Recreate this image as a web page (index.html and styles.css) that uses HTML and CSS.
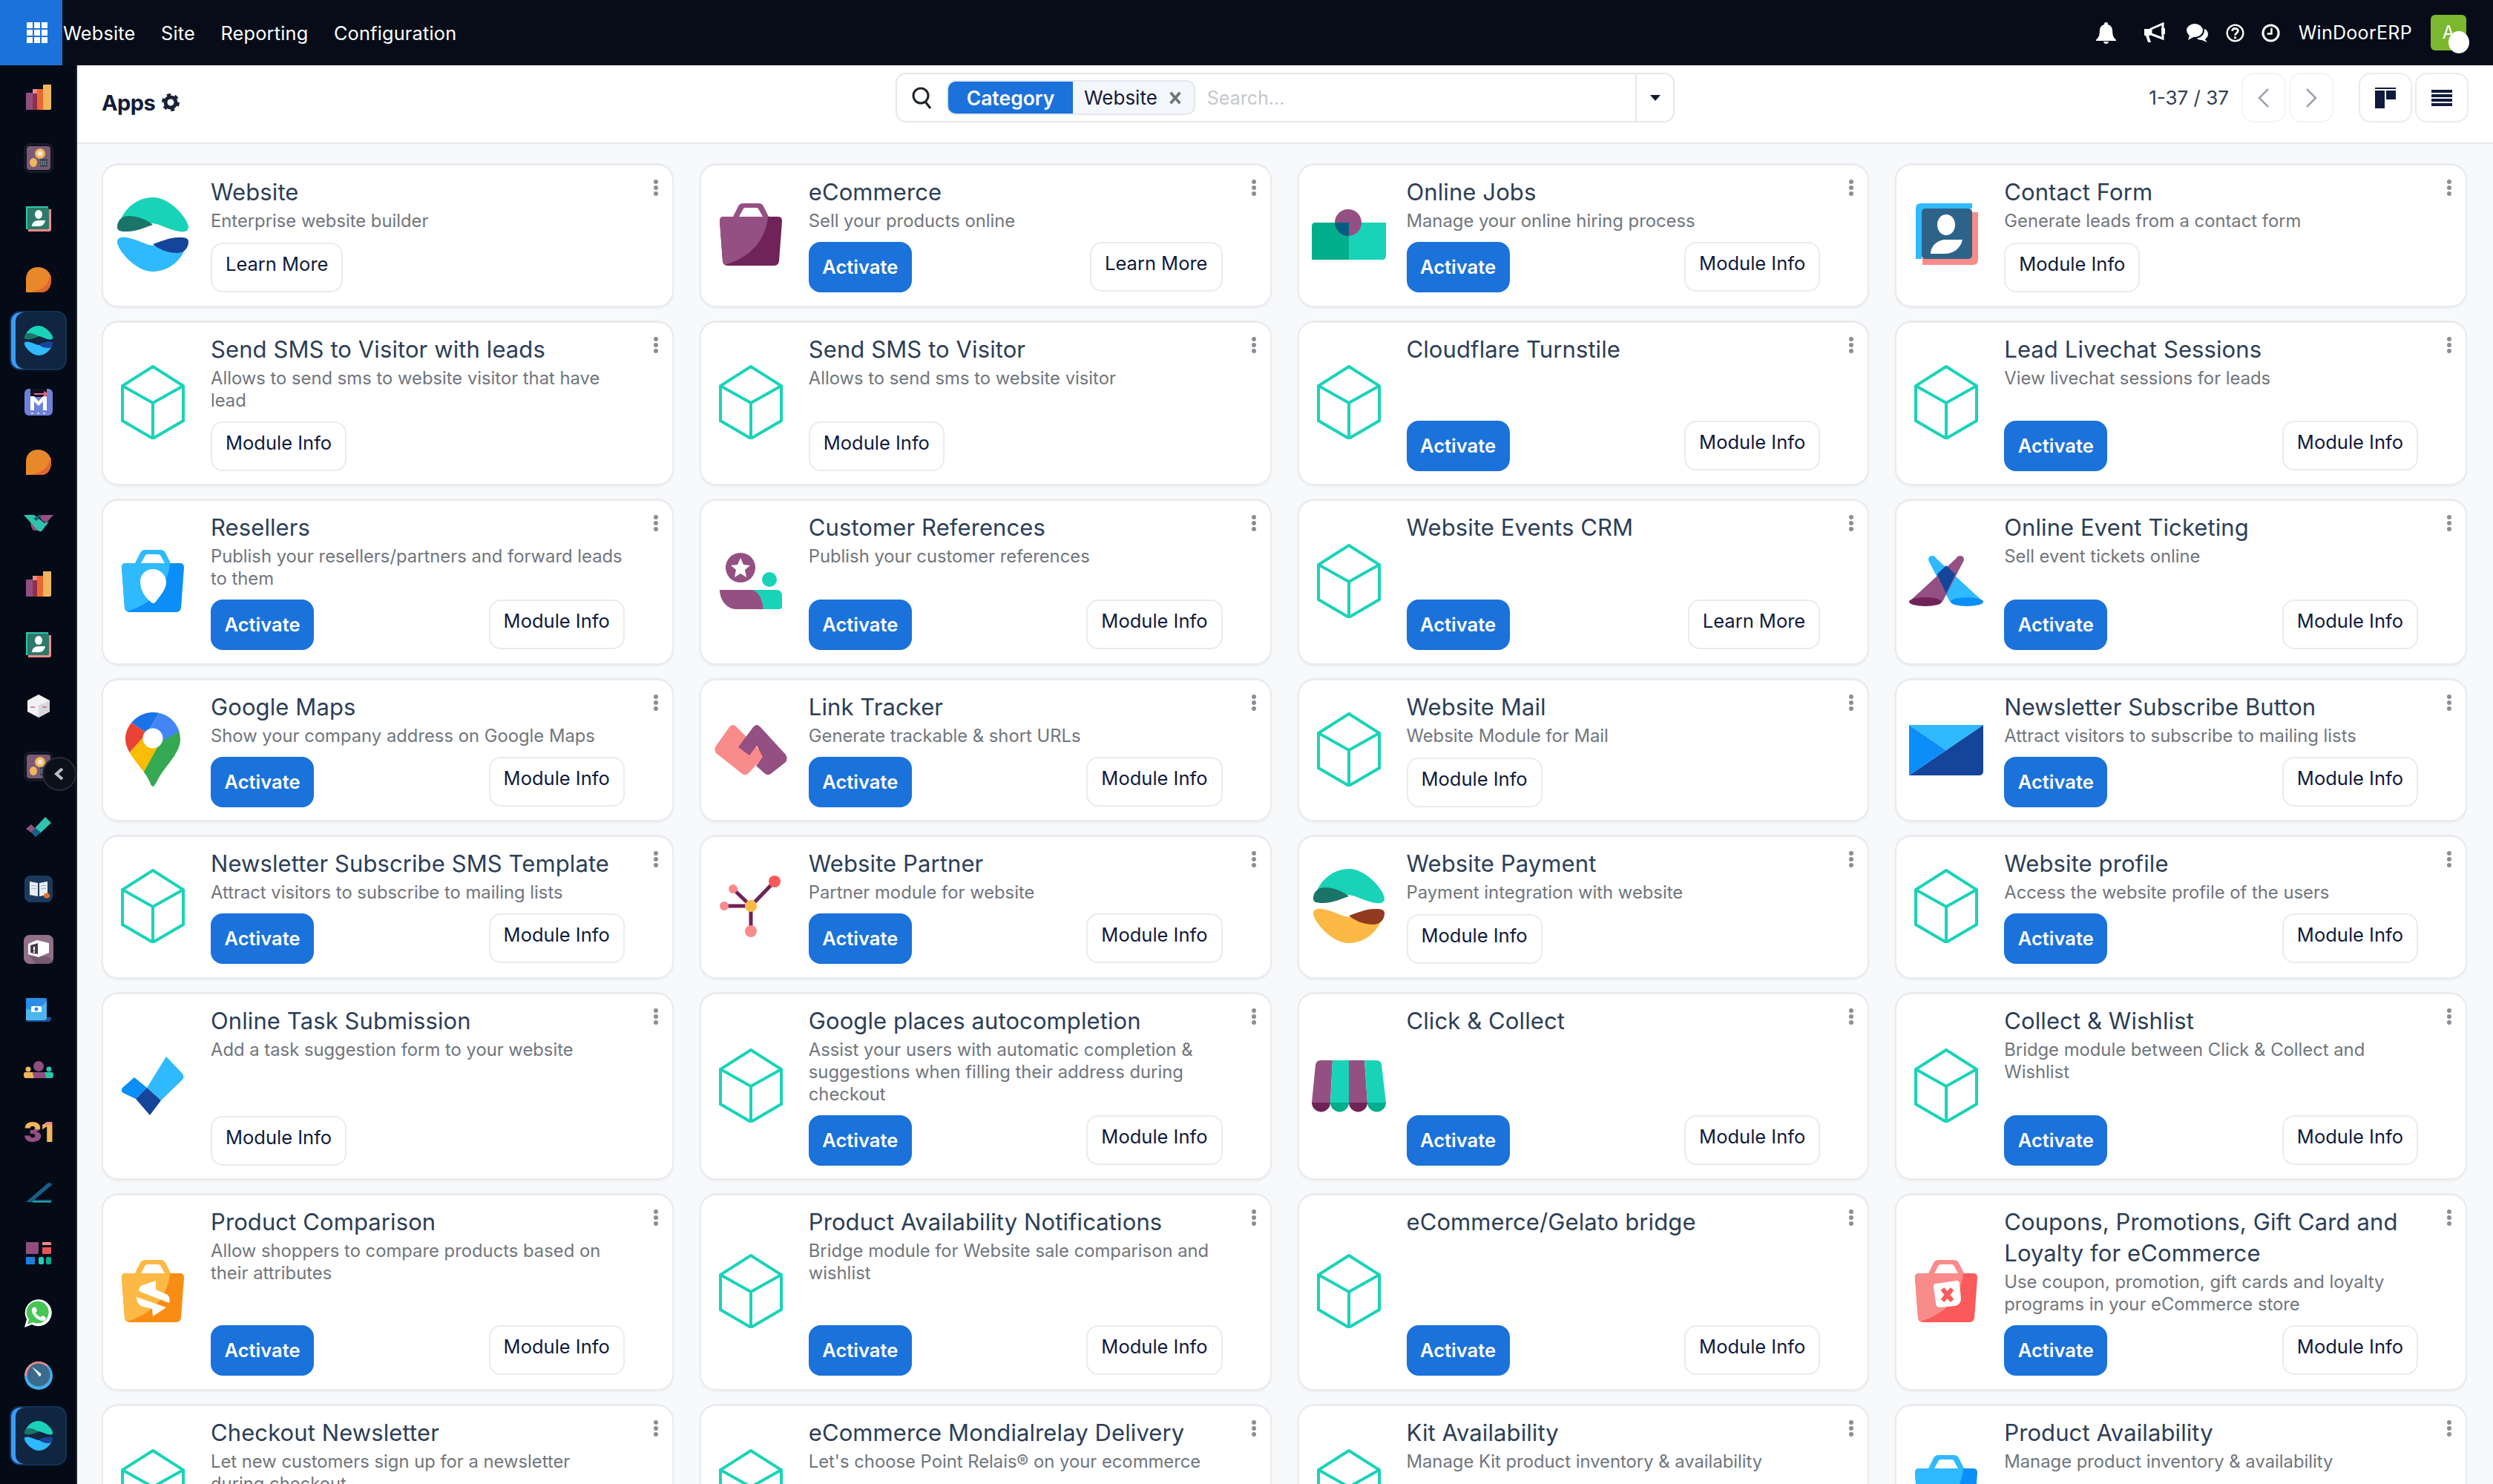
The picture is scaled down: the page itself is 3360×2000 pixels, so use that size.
FILE: index.html
```html
<!DOCTYPE html>
<html>
<head>
  <meta charset="utf-8">
  <title>Apps</title>
  <link rel="stylesheet" href="styles.css">
</head>
<body>
  <!-- shared icons -->
  <svg class="defs" width="0" height="0">
    <symbol id="i-cube" viewBox="0 0 100 100">
      <path fill="none" stroke="#19d3b9" stroke-width="4" stroke-linejoin="miter" d="M50 2 L91 28 V75 L50 99 L9 75 V28 Z M9 28 L50 51 L91 28 M50 51 V99"/>
    </symbol>
    <symbol id="i-website" viewBox="0 0 100 100">
      <path fill="#19d3b9" d="M4 38 C10 14 30 0 50 0 C74 0 98 30 98 40 C98 46 92 47 86 46 C72 44 60 36 50 35 Z"/>
      <path fill="#1a7568" d="M2 40 C2 30 10 25 17 25 C30 25 42 30 50 37 C40 40 28 46 16 46 C8 46 2 46 2 40Z"/>
      <path fill="#2fb9ff" d="M96 62 C90 86 70 100 50 100 C26 100 2 70 2 60 C2 54 8 53 14 54 C28 56 40 64 50 65 Z"/>
      <path fill="#15459a" d="M98 60 C98 70 90 75 83 75 C70 75 58 70 50 63 C60 60 72 54 84 54 C92 54 98 54 98 60Z"/>
    </symbol>
    <symbol id="i-payment" viewBox="0 0 100 100">
      <path fill="#19d3b9" d="M4 38 C10 14 30 0 50 0 C74 0 98 30 98 40 C98 46 92 47 86 46 C72 44 60 36 50 35 Z"/>
      <path fill="#1a7568" d="M2 40 C2 30 10 25 17 25 C30 25 42 30 50 37 C40 40 28 46 16 46 C8 46 2 46 2 40Z"/>
      <path fill="#fdb945" d="M96 62 C90 86 70 100 50 100 C26 100 2 70 2 60 C2 54 8 53 14 54 C28 56 40 64 50 65 Z"/>
      <path fill="#913a20" d="M98 60 C98 70 90 75 83 75 C70 75 58 70 50 63 C60 60 72 54 84 54 C92 54 98 54 98 60Z"/>
    </symbol>
    <symbol id="i-bag" viewBox="0 0 100 100">
      <path class="bag-light" d="M26 26 L33 12 Q35 8 40 8 H60 Q65 8 67 12 L74 26 H66 L61 17 Q60 14 57 14 H43 Q40 14 39 17 L34 26Z"/>
      <path class="bag-dark" d="M13 26 H87 Q92 26 92 32 L88 86 Q87 92 81 92 H19 Q13 92 12 86 L8 32 Q8 26 13 26Z"/>
      <path class="bag-light" d="M13 26 H73 C70 60 46 82 15 91 Q13 90 12 86 L8 32 Q8 26 13 26Z"/>
    </symbol>
    <symbol id="i-cube-small" viewBox="0 0 40 40">
      <path fill="#f2f2f4" d="M20 5 L35 13 V28 L20 36 L5 28 V13Z"/>
      <path fill="#d9d6dc" d="M20 20 L35 13 V28 L20 36Z"/>
      <path fill="none" stroke="#b56b9a" stroke-width="1.4" d="M9 22 h6 M25 22 h6"/>
    </symbol>
    <symbol id="s-chart" viewBox="0 0 40 40">
      <rect x="3" y="14" width="15" height="23" fill="#8f4e7e"/>
      <rect x="12" y="9" width="14" height="28" fill="#f08a8a"/>
      <rect x="12" y="15" width="6" height="22" fill="#8e2f4e"/>
      <rect x="18" y="9" width="8" height="28" fill="#e8682f"/>
      <path fill="#f2b65a" d="M26 3 H37 V35 Q37 37 35 37 H26Z"/>
    </symbol>
    <symbol id="s-calc" viewBox="0 0 40 40">
      <rect x="1" y="1" width="38" height="38" rx="7" fill="#0f1322" stroke="#242a3a" stroke-width="1"/>
      <rect x="4" y="4" width="32" height="32" rx="4" fill="#7a5a74"/>
      <circle cx="22" cy="14" r="7" fill="#f2b65a"/>
      <circle cx="22" cy="14" r="3.5" fill="#f7e9d4"/>
      <ellipse cx="13" cy="26" rx="5" ry="6" fill="#f2b65a"/>
      <rect x="22" y="21" width="10" height="11" fill="#3c4858"/>
      <path stroke="#cfd6dc" stroke-width="1.2" stroke-dasharray="1.4 1.4" d="M23 25 h8 M23 28 h8"/>
    </symbol>
    <symbol id="s-contact" viewBox="0 0 40 40">
      <path fill="#f08a8a" d="M6 7 H37 V34 Q37 37 34 37 H6Z"/>
      <path fill="#2fc3ad" d="M3 3 H33 V6 H6 V34 H3Z"/>
      <rect x="5" y="5" width="29" height="29" rx="2" fill="#2c7a6b"/>
      <ellipse cx="20" cy="14" rx="5" ry="6" fill="#fff"/>
      <path fill="#fff" d="M11 30 C11 25 15 22 20 22 H29 C28 27 25 30 20 30Z"/>
    </symbol>
    <symbol id="s-blob" viewBox="0 0 40 40">
      <path fill="#e8882a" d="M3 37 V19 C3 9 10 3 19 3 C29 3 37 10 37 20 C37 30 32 37 24 37 Z"/>
      <path fill="#e0652f" d="M37 20 C37 30 32 37 24 37 H10 C22 35 34 28 36 13 C37 15 37 18 37 20Z"/>
    </symbol>
  </svg>

  <header class="topbar">
    <a class="launcher">
      <svg width="28" height="28" viewBox="0 0 28 28" fill="#fff">
        <path d="M0 0h8v8H0z M10 0h8v8h-8z M20 0h8v8h-8z M0 10h8v8H0z M10 10h8v8h-8z M20 10h8v8h-8z M0 20h8v8H0z M10 20h8v8h-8z M20 20h8v8h-8z"/>
      </svg>
    </a>
    <nav class="topnav">
      <a>Website</a>
      <a>Site</a>
      <a>Reporting</a>
      <a>Configuration</a>
    </nav>
    <div class="systray">
      <svg class="tray-icon bell" viewBox="0 0 28 30" fill="#fff"><path d="M14 0 a2.6 2.6 0 0 1 2.6 3 C22 4.5 23 9 23 13 C23 19 25 22 28 24.500 V26 H0 V24.500 C3 22 5 19 5 13 C5 9 6 4.500 11.400 3 A2.600 2.600 0 0 1 14 0Z M10.500 27 h7 a3.500 3 0 0 1 -7 0Z"/></svg>
      <svg class="tray-icon horn" viewBox="0 0 28 28"><path fill="#fff" d="M0 9 H8 V18 H6 L9 27 H5 L2 18 H0Z"/><path fill="none" stroke="#fff" stroke-width="3" d="M9 9 L25 2 V22 L9 16Z"/><rect x="23" y="8" width="5" height="8" fill="#fff"/></svg>
      <svg class="tray-icon chat" viewBox="0 0 30 26"><ellipse cx="21" cy="15" rx="9" ry="8" fill="#fff"/><path fill="#fff" d="M24 20 L29 26 L19 22Z"/><ellipse cx="12" cy="10" rx="12" ry="10" fill="#fff" stroke="#070c18" stroke-width="2"/><path fill="#fff" d="M5 16 L3 23 L12 18Z"/></svg>
      <svg class="tray-icon help" viewBox="0 0 26 26"><circle cx="13" cy="13" r="11.300" fill="none" stroke="#fff" stroke-width="2.400"/><path fill="none" stroke="#fff" stroke-width="2.800" d="M9 10.500 C9 5.500 17 5.500 17 10 C17 13 13 13 13 16.500"/><rect x="11.500" y="18" width="3" height="3" fill="#fff"/></svg>
      <svg class="tray-icon clock" viewBox="0 0 26 26"><circle cx="13" cy="13" r="11" fill="none" stroke="#fff" stroke-width="3.200"/><path fill="none" stroke="#fff" stroke-width="2.600" d="M14 6 V14 H8"/></svg>
      <span class="company">WinDoorERP</span>
      <span class="avatar">A<i class="avatar-dot"></i></span>
    </div>
  </header>

  <div class="layout">
    <aside class="sidebar">
      <a class="side-item"><svg class="side-icon"><use href="#s-chart"/></svg></a>
      <a class="side-item"><svg class="side-icon"><use href="#s-calc"/></svg></a>
      <a class="side-item"><svg class="side-icon"><use href="#s-contact"/></svg></a>
      <a class="side-item"><svg class="side-icon"><use href="#s-blob"/></svg></a>
      <a class="side-item active"><svg class="side-icon"><use href="#i-website"/></svg></a>
      <a class="side-item">
        <svg class="side-icon" viewBox="0 0 40 40">
          <rect x="1" y="3" width="38" height="36" rx="6" fill="#6f82d8"/>
          <path fill="#0f1322" d="M9 3 H31 V14 H9Z"/>
          <path fill="#fff" d="M9 13 H14 L20 20 L26 13 H31 V32 H26 V20 L20 26 L14 20 V32 H9Z"/>
          <path fill="#f0648a" d="M14 9 H27 V6 L34 10 L27 14 V11 H14Z"/>
          <path stroke="#c9d2f4" stroke-width="2" stroke-dasharray="3 5" d="M10 36 H32"/>
        </svg>
      </a>
      <a class="side-item"><svg class="side-icon"><use href="#s-blob"/></svg></a>
      <a class="side-item">
        <svg class="side-icon" viewBox="0 0 40 40">
          <path fill="#955083" d="M20 9 H40 L30 20 L24 16Z"/>
          <path fill="#8f4e7e" d="M9 20 H22 L24 30 H14 Q10 28 9 20Z"/>
          <path fill="#2fc3ad" d="M0 9 H14 L28 20 L34 18 L24 31 Q21 32 18 29 Z"/>
          <path fill="#1a5d70" d="M13 14 L21 9 H25 L17 17Z"/>
        </svg>
      </a>
      <a class="side-item"><svg class="side-icon"><use href="#s-chart"/></svg></a>
      <a class="side-item"><svg class="side-icon"><use href="#s-contact"/></svg></a>
      <a class="side-item"><svg class="side-icon"><use href="#i-cube-small"/></svg></a>
      <a class="side-item"><svg class="side-icon"><use href="#s-calc"/></svg></a>
      <a class="side-item">
        <svg class="side-icon" viewBox="0 0 40 40">
          <path fill="#2fc3ad" d="M29 6 L37 14 L22 28 L15 21Z"/>
          <path fill="#955083" d="M3 22 L10 16 L16 22 L10 27Z"/>
          <path fill="#15608a" d="M10 27 L16 21 L23 27 L16 33Z"/>
        </svg>
      </a>
      <a class="side-item">
        <svg class="side-icon" viewBox="0 0 40 40">
          <rect x="1" y="3" width="38" height="36" rx="8" fill="#1c3a5e"/>
          <path fill="#e8edf2" d="M8 11 L19 13 V31 L8 29Z M21 13 L32 11 V29 L21 31Z"/>
          <path stroke="#9fb1c4" stroke-width="1.200" d="M10 16 L17 17 M10 20 L17 21 M23 17 L30 16 M23 21 L30 20"/>
          <ellipse cx="31" cy="30" rx="4" ry="3.500" fill="#e0732a"/>
        </svg>
      </a>
      <a class="side-item">
        <svg class="side-icon" viewBox="0 0 40 40">
          <rect x="0" y="1" width="40" height="39" rx="8" fill="#917088"/>
          <path fill="#5c4458" d="M8 30 L32 30 L40 36 Q40 40 34 40 H16Z" opacity=".5"/>
          <path fill="#fff" d="M6 13 L18 8 L34 12 L34 25 L20 31 L6 27Z"/>
          <path fill="#4b3a48" d="M9 15 L19 12 V27 L9 25Z"/>
          <rect x="13" y="17" width="2" height="5" fill="#fff"/>
          <rect x="13" y="23" width="2" height="2" fill="#fff"/>
        </svg>
      </a>
      <a class="side-item">
        <svg class="side-icon" viewBox="0 0 40 40">
          <path fill="#1d4ea1" d="M30 30 H37 Q37 36 33 36 H3 Q3 34 6 34Z"/>
          <path fill="#2a8de8" d="M3 4 H29 Q31 4 31 6 V30 Q31 34 27 34 H7 Q3 34 3 30Z"/>
          <path fill="#4cb6ee" d="M3 34 V18 C12 22 24 18 31 8 V30 Q31 34 27 34Z"/>
          <rect x="10" y="15" width="14" height="8" rx="1.500" fill="#fff"/>
          <circle cx="17" cy="19" r="2.500" fill="#2a8de8"/>
        </svg>
      </a>
      <a class="side-item">
        <svg class="side-icon" viewBox="0 0 40 40">
          <ellipse cx="20" cy="14" rx="7" ry="7" fill="#8f4e7e"/>
          <circle cx="6" cy="18" r="3.500" fill="#f2b65a"/>
          <circle cx="34" cy="18" r="3.500" fill="#2fc3ad"/>
          <path fill="#f2b65a" d="M2 22 H14 V30 H3 Q0 30 0 26 Q0 22 2 22Z"/>
          <path fill="#2fc3ad" d="M26 22 H38 Q40 22 40 26 Q40 30 37 30 H26Z"/>
          <path fill="#8f4e7e" d="M12 22 H28 Q30 26 30 30 H14 Q12 26 12 22Z"/>
        </svg>
      </a>
      <a class="side-item"><span class="cal-day"><b class="cal-3">3</b><b class="cal-1">1</b></span></a>
      <a class="side-item">
        <svg class="side-icon" viewBox="0 0 40 40">
          <path fill="#15608a" d="M3 33 L32 8 Q35 6 37 8 L38 10 L14 30 H37 L37 33Z"/>
          <rect x="12" y="32" width="25" height="1.500" fill="#2fc3ad"/>
        </svg>
      </a>
      <a class="side-item">
        <svg class="side-icon" viewBox="0 0 40 40">
          <path fill="#8f4e7e" d="M3 5 H20 V19 Q20 21 18 21 H3Z"/>
          <path fill="#f08a8a" d="M25 5 H35 Q37 5 37 7 V9 H25Z"/>
          <path fill="#e8545a" d="M25 12 H37 V19 Q37 21 35 21 H25Z"/>
          <path fill="#1b7fe0" d="M3 25 H15 Q15 35 15 35 H3Z"/>
          <rect x="20" y="25" width="7" height="10" rx="2" fill="#1fd0ba"/>
          <rect x="30" y="25" width="7" height="10" rx="2" fill="#00ae8c"/>
        </svg>
      </a>
      <a class="side-item">
        <svg class="side-icon" viewBox="0 0 40 40">
          <path fill="#fff" d="M1 38 L4 27 A18 18 0 1 1 11 34Z"/>
          <path fill="#45c655" d="M5 34 L7 27 A15 15 0 1 1 12 31Z"/>
          <path fill="#fff" d="M13 11 Q15 10 16 11 L18 15 Q18 17 16 18 Q18 22 23 24 Q25 22 26 22 L30 25 Q30 28 27 29 C19 30 10 20 11 14 Q11 12 13 11Z"/>
        </svg>
      </a>
      <a class="side-item">
        <svg class="side-icon" viewBox="0 0 40 40">
          <circle cx="20" cy="21" r="19" fill="#3fb0f0"/>
          <path fill="#ef8a8a" d="M1 21 A19 19 0 0 1 33 7 L20 21Z"/>
          <circle cx="20" cy="20" r="15.500" fill="#3c6a8c"/>
          <path fill="#fff" d="M11 9 L23 18 Q24 21 21 22 Z"/>
        </svg>
      </a>
      <a class="side-item active"><svg class="side-icon"><use href="#i-website"/></svg></a>
      <a class="side-toggle">
        <svg width="20" height="20" viewBox="0 0 20 20"><path fill="none" stroke="#b9bcc3" stroke-width="4" d="M14 3 L6 10 L14 17"/></svg>
      </a>
    </aside>

    <main class="content">
      <div class="control-panel">
        <div class="cp-title">
          <span class="breadcrumb">Apps</span>
          <svg class="gear" viewBox="0 0 24 24">
            <circle cx="12" cy="12" r="7" fill="none" stroke="#1a2238" stroke-width="5"/>
            <circle cx="12" cy="12" r="10" fill="none" stroke="#1a2238" stroke-width="4" stroke-dasharray="5 5.470"/>
          </svg>
        </div>
        <div class="searchbox">
          <svg class="search-icon" viewBox="0 0 26 30"><ellipse cx="12" cy="12" rx="10" ry="10" fill="none" stroke="#212529" stroke-width="3"/><path stroke="#212529" stroke-width="3.200" d="M18 20 L25 29"/></svg>
          <div class="facet">
            <span class="facet-name">Category</span>
            <span class="facet-value">Website</span>
            <svg class="facet-remove" viewBox="0 0 20 20"><path stroke="#6c757d" stroke-width="4" d="M3 2 L17 18 M17 2 L3 18"/></svg>
          </div>
          <span class="placeholder">Search...</span>
          <span class="search-toggle"><i class="caret"></i></span>
        </div>
        <div class="cp-right">
          <span class="pager-text">1-37 / 37</span>
          <div class="pager-btns">
            <button class="icon-btn pager-btn"><svg width="18" height="28" viewBox="0 0 18 28"><path fill="none" stroke="#9ca1ad" stroke-width="2.500" d="M15 2 L3 14 L15 26"/></svg></button>
            <button class="icon-btn pager-btn"><svg width="18" height="28" viewBox="0 0 18 28"><path fill="none" stroke="#9ca1ad" stroke-width="2.500" d="M3 2 L15 14 L3 26"/></svg></button>
          </div>
          <div class="view-btns">
            <button class="icon-btn view-btn"><svg width="28" height="28" viewBox="0 0 28 28" fill="#101a3c"><path d="M0 0 H28 V2 H0Z M0 4 H13 V28 H0Z M15 4 H28 V16 H15Z"/></svg></button>
            <button class="icon-btn view-btn"><svg width="28" height="22" viewBox="0 0 28 22" fill="#101a3c"><path d="M0 0 H28 V4 H0Z M0 6 H28 V10 H0Z M0 12 H28 V16 H0Z M0 18 H28 V22 H0Z"/></svg></button>
          </div>
        </div>
      </div>

      <div class="app-grid">
        <article class="card"><i class="card-menu"></i>
          <svg class="app-icon"><use href="#i-website"/></svg>
          <div class="card-body"><h4>Website</h4><p>Enterprise website builder</p>
            <div class="actions"><a class="btn">Learn More</a></div></div>
        </article>
        <article class="card"><i class="card-menu"></i>
          <svg class="app-icon bag-purple"><use href="#i-bag"/></svg>
          <div class="card-body"><h4>eCommerce</h4><p>Sell your products online</p>
            <div class="actions"><a class="btn primary">Activate</a><a class="btn">Learn More</a></div></div>
        </article>
        <article class="card"><i class="card-menu"></i>
          <svg class="app-icon" viewBox="0 0 100 100">
            <path fill="#00ae8c" d="M5 34 H50 V84 H0 V39 Q0 34 5 34Z"/>
            <path fill="#19d3b9" d="M50 34 H100 V79 Q100 84 95 84 H50Z"/>
            <circle cx="49" cy="34" r="18" fill="#955083"/>
            <path fill="#005f80" d="M31 34 H50 V52 C40 52 31 44 31 34Z"/>
          </svg>
          <div class="card-body"><h4>Online Jobs</h4><p>Manage your online hiring process</p>
            <div class="actions"><a class="btn primary">Activate</a><a class="btn">Module Info</a></div></div>
        </article>
        <article class="card"><i class="card-menu"></i>
          <svg class="app-icon" viewBox="0 0 100 100">
            <path fill="#fa8b8b" d="M18 20 H93 V84 Q93 91 86 91 H18Z"/>
            <path fill="#2fb9ff" d="M16 8 H85 V15 H25 Q17 15 17 24 V83 H9 V15 Q9 8 16 8Z"/>
            <rect x="17" y="15" width="68" height="68" rx="5" fill="#2d6389"/>
            <ellipse cx="50" cy="37" rx="12" ry="14" fill="#fff"/>
            <path fill="#fff" d="M29 76 C29 66 38 57 49 57 H72 C70 68 60 76 48 76Z"/>
          </svg>
          <div class="card-body"><h4>Contact Form</h4><p>Generate leads from a contact form</p>
            <div class="actions"><a class="btn">Module Info</a></div></div>
        </article>

        <article class="card"><i class="card-menu"></i>
          <svg class="app-icon"><use href="#i-cube"/></svg>
          <div class="card-body"><h4>Send SMS to Visitor with leads</h4><p>Allows to send sms to website visitor that have lead</p>
            <div class="actions"><a class="btn">Module Info</a></div></div>
        </article>
        <article class="card"><i class="card-menu"></i>
          <svg class="app-icon"><use href="#i-cube"/></svg>
          <div class="card-body"><h4>Send SMS to Visitor</h4><p>Allows to send sms to website visitor</p>
            <div class="actions"><a class="btn">Module Info</a></div></div>
        </article>
        <article class="card"><i class="card-menu"></i>
          <svg class="app-icon"><use href="#i-cube"/></svg>
          <div class="card-body"><h4>Cloudflare Turnstile</h4>
            <div class="actions"><a class="btn primary">Activate</a><a class="btn">Module Info</a></div></div>
        </article>
        <article class="card"><i class="card-menu"></i>
          <svg class="app-icon"><use href="#i-cube"/></svg>
          <div class="card-body"><h4>Lead Livechat Sessions</h4><p>View livechat sessions for leads</p>
            <div class="actions"><a class="btn primary">Activate</a><a class="btn">Module Info</a></div></div>
        </article>

        <article class="card"><i class="card-menu"></i>
          <svg class="app-icon bag-blue" viewBox="0 0 100 100"><use href="#i-bag"/>
            <path fill="#fff" d="M50 34 C60 34 68 42 68 52 C68 62 58 72 54 78 Q50 82 47 78 C38 70 33 62 33 50 C33 42 40 34 50 34Z"/>
          </svg>
          <div class="card-body"><h4>Resellers</h4><p>Publish your resellers/partners and forward leads to them</p>
            <div class="actions"><a class="btn primary">Activate</a><a class="btn">Module Info</a></div></div>
        </article>
        <article class="card"><i class="card-menu"></i>
          <svg class="app-icon" viewBox="0 0 100 100">
            <circle cx="36" cy="32" r="20" fill="#955083"/>
            <path fill="#fff" d="M36 19 L40 28 L49 29 L42 35 L44 45 L36 40 L28 45 L30 35 L23 29 L32 28Z"/>
            <circle cx="75" cy="48" r="10" fill="#19d3b9"/>
            <path fill="#19d3b9" d="M48 62 H84 Q92 62 92 70 V84 Q92 88 88 88 H67 C66 75 60 62 48 62Z"/>
            <path fill="#955083" d="M8 62 H50 C60 62 66 75 67 88 H30 C18 88 8 76 8 62Z"/>
          </svg>
          <div class="card-body"><h4>Customer References</h4><p>Publish your customer references</p>
            <div class="actions"><a class="btn primary">Activate</a><a class="btn">Module Info</a></div></div>
        </article>
        <article class="card"><i class="card-menu"></i>
          <svg class="app-icon"><use href="#i-cube"/></svg>
          <div class="card-body"><h4>Website Events CRM</h4>
            <div class="actions"><a class="btn primary">Activate</a><a class="btn">Learn More</a></div></div>
        </article>
        <article class="card"><i class="card-menu"></i>
          <svg class="app-icon" viewBox="0 0 100 100">
            <path fill="#2fb9ff" d="M26 22 Q26 16 31 16 Q35 16 37 20 L100 78 L55 78 Z"/>
            <path fill="#955083" d="M74 22 Q74 16 69 16 Q65 16 63 20 L0 78 L45 78 Z"/>
            <path fill="#15459a" d="M50 29 L62.300 41 L50 67 L37.700 41Z"/>
            <ellipse cx="22" cy="78" rx="22" ry="6" fill="#6f2358"/>
            <ellipse cx="78" cy="78" rx="22" ry="6" fill="#0b8ef8"/>
          </svg>
          <div class="card-body"><h4>Online Event Ticketing</h4><p>Sell event tickets online</p>
            <div class="actions"><a class="btn primary">Activate</a><a class="btn">Module Info</a></div></div>
        </article>

        <article class="card"><i class="card-menu"></i>
          <svg class="app-icon" viewBox="0 0 100 100">
            <clipPath id="pin-clip"><path d="M50 0 C72 0 87 17 87 36 C87 56 66 72 56 92 Q52 100 50 100 Q48 100 45 92 C38 76 13 56 13 36 C13 17 30 0 50 0Z"/></clipPath>
            <g clip-path="url(#pin-clip)">
              <polygon fill="#1a73e8" points="5,-5 62,-5 42,28 18,12"/>
              <polygon fill="#4285f4" points="62,-5 100,-5 100,18 58,42 42,28"/>
              <polygon fill="#ea4335" points="0,10 18,12 42,28 12,62 0,62"/>
              <polygon fill="#fbbc04" points="12,62 42,28 62,40 36,88 0,100"/>
              <polygon fill="#34a853" points="100,18 100,105 30,105 36,84 60,40"/>
            </g>
            <circle cx="50" cy="35" r="13.500" fill="#fff"/>
          </svg>
          <div class="card-body"><h4>Google Maps</h4><p>Show your company address on Google Maps</p>
            <div class="actions"><a class="btn primary">Activate</a><a class="btn">Module Info</a></div></div>
        </article>
        <article class="card"><i class="card-menu"></i>
          <svg class="app-icon" viewBox="0 0 100 100">
            <path fill="#fa8b8b" d="M21 20 Q26 14 31 20 L65 54 Q68 58 65 62 L47 82 Q41 87 36 81 L3 55 Q0 50 3 45Z"/>
            <path fill="#955083" d="M53 20 Q58 14 63 20 L97 57 Q100 62 97 67 L78 82 Q72 87 67 81 L57 72 L66 60 L58 45 L48 58 L33 47Z"/>
          </svg>
          <div class="card-body"><h4>Link Tracker</h4><p>Generate trackable &amp; short URLs</p>
            <div class="actions"><a class="btn primary">Activate</a><a class="btn">Module Info</a></div></div>
        </article>
        <article class="card"><i class="card-menu"></i>
          <svg class="app-icon"><use href="#i-cube"/></svg>
          <div class="card-body"><h4>Website Mail</h4><p>Website Module for Mail</p>
            <div class="actions"><a class="btn">Module Info</a></div></div>
        </article>
        <article class="card"><i class="card-menu"></i>
          <svg class="app-icon" viewBox="0 0 100 100">
            <path fill="#15459a" d="M100 17 V79 Q100 85 94 85 H0Z"/>
            <path fill="#0b8ef8" d="M0 17 L50 51 L0 85Z"/>
            <path fill="#2fb9ff" d="M0 17 H100 L50 51Z"/>
          </svg>
          <div class="card-body"><h4>Newsletter Subscribe Button</h4><p>Attract visitors to subscribe to mailing lists</p>
            <div class="actions"><a class="btn primary">Activate</a><a class="btn">Module Info</a></div></div>
        </article>

        <article class="card"><i class="card-menu"></i>
          <svg class="app-icon"><use href="#i-cube"/></svg>
          <div class="card-body"><h4>Newsletter Subscribe SMS Template</h4><p>Attract visitors to subscribe to mailing lists</p>
            <div class="actions"><a class="btn primary">Activate</a><a class="btn">Module Info</a></div></div>
        </article>
        <article class="card"><i class="card-menu"></i>
          <svg class="app-icon" viewBox="0 0 100 100">
            <path fill="none" stroke="#6f2358" stroke-width="5" d="M50 50 L82 17 M50 50 L26 27 M50 50 H14 M50 50 V84"/>
            <circle cx="82" cy="17" r="8" fill="#fa5a5a"/>
            <circle cx="26" cy="27" r="6" fill="#fa8b8b"/>
            <circle cx="14" cy="50" r="6" fill="#fa8b8b"/>
            <circle cx="50" cy="84" r="8" fill="#fa8b8b"/>
            <circle cx="50" cy="50" r="8" fill="#fdb945"/>
          </svg>
          <div class="card-body"><h4>Website Partner</h4><p>Partner module for website</p>
            <div class="actions"><a class="btn primary">Activate</a><a class="btn">Module Info</a></div></div>
        </article>
        <article class="card"><i class="card-menu"></i>
          <svg class="app-icon"><use href="#i-payment"/></svg>
          <div class="card-body"><h4>Website Payment</h4><p>Payment integration with website</p>
            <div class="actions"><a class="btn">Module Info</a></div></div>
        </article>
        <article class="card"><i class="card-menu"></i>
          <svg class="app-icon"><use href="#i-cube"/></svg>
          <div class="card-body"><h4>Website profile</h4><p>Access the website profile of the users</p>
            <div class="actions"><a class="btn primary">Activate</a><a class="btn">Module Info</a></div></div>
        </article>

        <article class="card"><i class="card-menu"></i>
          <svg class="app-icon" viewBox="0 0 100 100">
            <path fill="#2fb9ff" d="M68 11 L90 34 Q93 38 90 42 L61 70 L42 53Z"/>
            <path fill="#0b8ef8" d="M25 39 L42 53 L27 68 L10 60 Q6 57 9 53Z"/>
            <path fill="#15459a" d="M42 53 L61 70 L46 90 L27 68Z"/>
          </svg>
          <div class="card-body"><h4>Online Task Submission</h4><p>Add a task suggestion form to your website</p>
            <div class="actions"><a class="btn">Module Info</a></div></div>
        </article>
        <article class="card"><i class="card-menu"></i>
          <svg class="app-icon"><use href="#i-cube"/></svg>
          <div class="card-body"><h4>Google places autocompletion</h4><p>Assist your users with automatic completion &amp; suggestions when filling their address during checkout</p>
            <div class="actions"><a class="btn primary">Activate</a><a class="btn">Module Info</a></div></div>
        </article>
        <article class="card"><i class="card-menu"></i>
          <svg class="app-icon" viewBox="0 0 100 100">
            <path fill="#955083" d="M12 16 H28 L25 73 H0 L5 22 Q6 16 12 16Z"/>
            <path fill="#19d3b9" d="M28 16 H50 V73 H25Z"/>
            <path fill="#955083" d="M50 16 H71 L75 73 H50Z"/>
            <path fill="#19d3b9" d="M71 16 H87 Q93 16 94 22 L100 73 H75Z"/>
            <path fill="#6f2358" d="M0 73 H25 A12.500 12.500 0 0 1 0 73Z M50 73 H75 A12.500 12.500 0 0 1 50 73Z"/>
            <path fill="#00ae8c" d="M25 73 H50 A12.500 12.500 0 0 1 25 73Z M75 73 H100 A12.500 12.500 0 0 1 75 73Z"/>
          </svg>
          <div class="card-body"><h4>Click &amp; Collect</h4>
            <div class="actions"><a class="btn primary">Activate</a><a class="btn">Module Info</a></div></div>
        </article>
        <article class="card"><i class="card-menu"></i>
          <svg class="app-icon"><use href="#i-cube"/></svg>
          <div class="card-body"><h4>Collect &amp; Wishlist</h4><p>Bridge module between Click &amp; Collect and Wishlist</p>
            <div class="actions"><a class="btn primary">Activate</a><a class="btn">Module Info</a></div></div>
        </article>

        <article class="card"><i class="card-menu"></i>
          <svg class="app-icon bag-orange" viewBox="0 0 100 100"><use href="#i-bag"/>
            <path fill="#fff" d="M54 36 V48 L70 55 Q74 60 72 66 L31 50 Q31 44 36 42Z"/>
            <path fill="#fff" d="M28 58 L68 72 L50 84 L49 74 L34 70 Q28 66 28 58Z"/>
          </svg>
          <div class="card-body"><h4>Product Comparison</h4><p>Allow shoppers to compare products based on their attributes</p>
            <div class="actions"><a class="btn primary">Activate</a><a class="btn">Module Info</a></div></div>
        </article>
        <article class="card"><i class="card-menu"></i>
          <svg class="app-icon"><use href="#i-cube"/></svg>
          <div class="card-body"><h4>Product Availability Notifications</h4><p>Bridge module for Website sale comparison and wishlist</p>
            <div class="actions"><a class="btn primary">Activate</a><a class="btn">Module Info</a></div></div>
        </article>
        <article class="card"><i class="card-menu"></i>
          <svg class="app-icon"><use href="#i-cube"/></svg>
          <div class="card-body"><h4>eCommerce/Gelato bridge</h4>
            <div class="actions"><a class="btn primary">Activate</a><a class="btn">Module Info</a></div></div>
        </article>
        <article class="card"><i class="card-menu"></i>
          <svg class="app-icon bag-red" viewBox="0 0 100 100"><use href="#i-bag"/>
            <path fill="#fff" d="M36 40 L64 36 Q68 36 68 40 L70 60 Q70 68 62 70 L42 72 Q36 72 36 66 L33 44 Q33 40 36 40Z"/>
            <path fill="none" stroke="#fa5a5a" stroke-width="6" d="M45 47 L58 63 M58 47 L45 63"/>
          </svg>
          <div class="card-body"><h4>Coupons, Promotions, Gift Card and Loyalty for eCommerce</h4><p>Use coupon, promotion, gift cards and loyalty programs in your eCommerce store</p>
            <div class="actions"><a class="btn primary">Activate</a><a class="btn">Module Info</a></div></div>
        </article>

        <article class="card"><i class="card-menu"></i>
          <svg class="app-icon"><use href="#i-cube"/></svg>
          <div class="card-body"><h4>Checkout Newsletter</h4><p>Let new customers sign up for a newsletter during checkout</p>
            <div class="actions"><a class="btn primary">Activate</a><a class="btn">Module Info</a></div></div>
        </article>
        <article class="card"><i class="card-menu"></i>
          <svg class="app-icon"><use href="#i-cube"/></svg>
          <div class="card-body"><h4>eCommerce Mondialrelay Delivery</h4><p>Let's choose Point Relais® on your ecommerce</p>
            <div class="actions"><a class="btn primary">Activate</a><a class="btn">Module Info</a></div></div>
        </article>
        <article class="card"><i class="card-menu"></i>
          <svg class="app-icon"><use href="#i-cube"/></svg>
          <div class="card-body"><h4>Kit Availability</h4><p>Manage Kit product inventory &amp; availability</p>
            <div class="actions"><a class="btn primary">Activate</a><a class="btn">Module Info</a></div></div>
        </article>
        <article class="card"><i class="card-menu"></i>
          <svg class="app-icon bag-blue"><use href="#i-bag"/></svg>
          <div class="card-body"><h4>Product Availability</h4><p>Manage product inventory &amp; availability</p>
            <div class="actions"><a class="btn primary">Activate</a><a class="btn">Module Info</a></div></div>
        </article>
      </div>
    </main>
  </div>
</body>
</html>
```

FILE: styles.css
```css
*{
  box-sizing:border-box;
}
html,body{
  margin:0;
  height:100%;
  overflow:hidden;
}
body{
  display:flex;
  flex-direction:column;
  font-family:Inter,"Noto Sans",sans-serif;
  background:#f8f9fa;
  color:#212529;
}
.defs{
  position:absolute;
}
.bag-light{ fill:var(--light); }
.bag-dark{ fill:var(--dark); }
.bag-purple{ --light:#955083; --dark:#6f2358; }
.bag-blue{ --light:#2fb9ff; --dark:#0b8ef8; }
.bag-orange{ --light:#fdb945; --dark:#f98d14; }
.bag-red{ --light:#fa8b8b; --dark:#fa5a5a; }

/* top bar */
.topbar{
  height:88px;
  flex:none;
  display:flex;
  align-items:center;
  background:#070c18;
  color:#fff;
}
.launcher{
  width:84px;
  height:88px;
  display:flex;
  align-items:center;
  padding-left:36px;
  background:#1b72da;
}
.topnav{
  display:flex;
  gap:34.5px;
  margin-left:1px;
  font-size:25.3px;
  letter-spacing:.2px;
}
.systray{
  margin-left:auto;
  display:flex;
  align-items:center;
  padding-right:36px;
}
.tray-icon{
  display:block;
}
.bell{ width:27px; height:29px; }
.horn{ width:28px; height:28px; margin-left:38px; }
.chat{ width:30px; height:26px; margin-left:28px; }
.help{ width:25px; height:25px; margin-left:24px; }
.clock{ width:25px; height:25px; margin-left:23px; }
.company{
  margin-left:25px;
  font-size:25px;
  letter-spacing:.3px;
}
.avatar{
  position:relative;
  width:48px;
  height:48px;
  margin-left:25px;
  background:#7cb82f;
  border-radius:6px;
  font-size:24px;
  line-height:48px;
  text-align:center;
}
.avatar-dot{
  position:absolute;
  left:24px;
  top:22px;
  width:28px;
  height:30px;
  border-radius:50%;
  background:#fff;
}

.layout{
  flex:1;
  min-height:0;
  display:flex;
}

/* left app bar */
.sidebar{
  position:relative;
  width:104px;
  flex:none;
  display:flex;
  flex-direction:column;
  padding-top:2px;
  background:#050b16;
  border-right:2px solid #1c2230;
}
.side-item{
  flex:none;
  display:flex;
  align-items:center;
  justify-content:center;
  width:77px;
  height:80px;
  margin:1px 0 1px 13px;
  border-radius:14px;
}
.side-item.active{
  background:#0f2540;
  box-shadow:inset 6px 0 0 #3a9bfb;
  border:2px solid #123358;
}
.side-icon{
  width:40px;
  height:40px;
  display:block;
}
.cal-day{
  font-size:37px;
  font-weight:700;
  line-height:1;
  letter-spacing:-1px;
}
.cal-3{
  background:linear-gradient(#f2b65a 42%,#955083 42%);
  -webkit-background-clip:text;
  background-clip:text;
  color:transparent;
}
.cal-1{
  background:linear-gradient(#f08a8a 30%,#f2b65a 30%);
  -webkit-background-clip:text;
  background-clip:text;
  color:transparent;
}
.side-toggle{
  position:absolute;
  left:57px;
  top:932px;
  width:46px;
  height:46px;
  display:flex;
  align-items:center;
  justify-content:center;
  border-radius:50%;
  background:#0b101b;
  border:2px solid #262b36;
}

/* control panel */
.content{
  flex:1;
  min-width:0;
  overflow:hidden;
}
.control-panel{
  height:106px;
  display:grid;
  grid-template-columns:1fr 1050px 1fr;
  align-items:start;
  padding:10px 33px 0 33px;
  background:#fff;
  border-bottom:2px solid #e5e7eb;
}
.cp-title{
  display:flex;
  align-items:center;
  height:80px;
  gap:9px;
}
.breadcrumb{
  font-size:29px;
  font-weight:700;
  color:#141c36;
  letter-spacing:-.6px;
}
.gear{
  width:24px;
  height:24px;
}
.searchbox{
  position:relative;
  height:67px;
  display:flex;
  align-items:center;
  padding-left:20px;
  border:2px solid #e5e7eb;
  border-radius:14px;
}
.search-icon{
  width:26px;
  height:30px;
}
.facet{
  display:flex;
  align-items:center;
  height:47px;
  margin-left:21px;
  background:#f4f7fc;
  border:2px solid #e5e7eb;
  border-radius:12px;
  overflow:hidden;
}
.facet-name{
  width:168px;
  height:100%;
  display:flex;
  align-items:center;
  justify-content:center;
  background:#1b72da;
  color:#fff;
  font-size:26.5px;
  font-weight:600;
}
.facet-value{
  margin-left:15px;
  font-size:26px;
  color:#141c36;
}
.facet-remove{
  width:18px;
  height:18px;
  margin:0 16px 0 15px;
}
.placeholder{
  margin-left:16px;
  font-size:25px;
  color:#c4c7cc;
}
.search-toggle{
  position:absolute;
  right:0;
  top:0;
  width:51px;
  height:100%;
  display:flex;
  align-items:center;
  justify-content:center;
  border-left:2px solid #e5e7eb;
}
.caret{
  width:0;
  height:0;
  border-left:7px solid transparent;
  border-right:7px solid transparent;
  border-top:8px solid #141c36;
}
.cp-right{
  display:flex;
  justify-content:flex-end;
  align-items:center;
  height:67px;
}
.pager-text{
  font-size:26px;
  color:#2f3e55;
}
.pager-btns,.view-btns{
  display:flex;
  gap:4px;
}
.pager-btns{
  margin-left:17px;
}
.view-btns{
  margin-left:34px;
}
.icon-btn{
  height:67px;
  display:flex;
  align-items:center;
  justify-content:center;
  padding:0;
  background:#fff;
  border:2px solid #e9ebee;
  border-radius:16px;
}
.pager-btn{
  width:60px;
  border-color:#f3f4f6;
}
.view-btn{
  width:72px;
}

/* app cards */
.app-grid{
  display:grid;
  grid-template-columns:repeat(4,1fr);
  gap:18px 35px;
  padding:26px 35px 0 33px;
}
.card{
  position:relative;
  display:flex;
  gap:28px;
  padding:15px 64px 17.5px 17px;
  background:#fff;
  border:2px solid #e9ebee;
  border-top-width:3px;
  border-radius:22px;
  box-shadow:0 2px 3px rgba(0,0,0,.05);
}
.card-menu{
  position:absolute;
  top:19px;
  right:19px;
  width:6px;
  height:6px;
  border-radius:50%;
  background:#8a8f96;
  box-shadow:0 8px #8a8f96,0 16px #8a8f96;
}
.app-icon{
  width:100px;
  height:100px;
  flex:none;
  align-self:center;
}
.card-body{
  flex:1;
  min-width:0;
  display:flex;
  flex-direction:column;
}
.card-body h4{
  margin:0;
  font-size:31px;
  line-height:42px;
  font-weight:400;
  letter-spacing:.1px;
  color:#2c3e56;
}
.card-body p{
  margin:3px 0 13px;
  font-size:23.8px;
  line-height:30px;
  color:#71767d;
}
.actions{
  margin-top:auto;
  display:flex;
  justify-content:space-between;
  align-items:flex-start;
}
.btn{
  height:67px;
  padding:9px 18px;
  font-size:25.5px;
  line-height:36px;
  color:#101a3c;
  border:2px solid #e9ebee;
  border-radius:16px;
}
.btn.primary{
  height:68px;
  width:139px;
  padding:14px 0;
  text-align:center;
  background:#1b72da;
  border-color:#1b72da;
  color:#fff;
  font-weight:600;
}
```
